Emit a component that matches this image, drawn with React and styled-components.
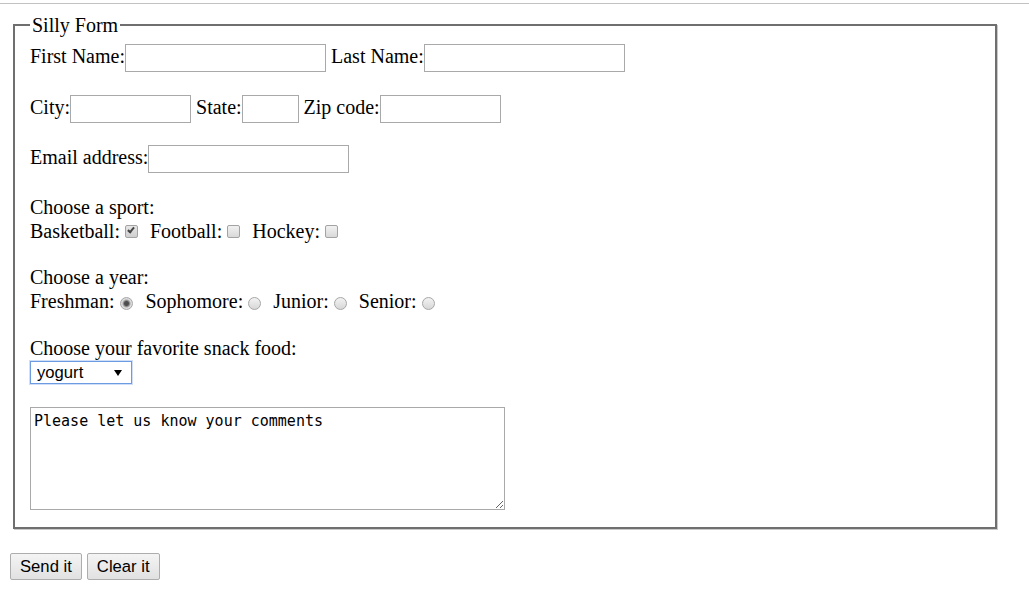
import React from "react";
import styled, { createGlobalStyle } from "styled-components";

const GlobalStyle = createGlobalStyle`
  *, *::before, *::after {
    box-sizing: border-box;
  }
  html, body {
    margin: 0;
    padding: 0;
    background: #fff;
  }
  body {
    font-family: "Liberation Serif", "Times New Roman", serif;
    font-size: 20px;
    color: #000;
  }
`;

const Page = styled.div`
  padding: 0 10px 20px;
`;

const TopRule = styled.div`
  height: 1px;
  margin: 3px -10px 0;
  background: #c2c2c2;
`;

const Fieldset = styled.fieldset`
  width: 984px;
  margin: 10px 0 0 3px;
  padding: 8px 15px 17px;
  border: 2px solid #6f6f6f;
  box-shadow: 1px 1px 0 #c9c9c9;
  min-inline-size: 0;
`;

const Legend = styled.legend`
  padding: 0 2px;
  line-height: 22px;
`;

const Row = styled.div`
  height: 28px;
  line-height: 23px;
  margin-bottom: 22.5px;
  white-space: nowrap;
`;

const TextInput = styled.input.attrs({ type: "text" })`
  width: ${(p) => p.$w}px;
  height: 28px;
  padding: 1px 2px;
  border: 1px solid #a9a9a9;
  font-family: "Liberation Sans", Arial, sans-serif;
  font-size: 16.67px;
  background: #fff;
  vertical-align: baseline;
  outline: none;
`;

const Group = styled.div`
  margin-bottom: 23.5px;
`;

const Caption = styled.div`
  line-height: 23px;
`;

const Options = styled.div`
  display: flex;
  align-items: center;
  height: 24px;
  padding-top: 1px;
  white-space: nowrap;
`;

const Checkbox = styled.input.attrs({ type: "checkbox" })`
  appearance: none;
  position: relative;
  width: 13px;
  height: 13px;
  margin: 0 12px 0 5px;
  border: 1px solid #a3a3a3;
  border-radius: 2px;
  background: linear-gradient(#f1f1f1, #d9d9d9);
  flex: none;

  &:checked {
    background: linear-gradient(#e6e6e6, #cfcfcf);
  }

  &:checked::after {
    content: "";
    position: absolute;
    left: 3.5px;
    top: 0.5px;
    width: 4px;
    height: 7px;
    border-right: 2px solid #444;
    border-bottom: 2px solid #444;
    transform: rotate(40deg);
  }
`;

const Radio = styled.input.attrs({ type: "radio" })`
  appearance: none;
  width: 13px;
  height: 13px;
  margin: 3px 12px 0 ${(p) => (p.$first ? 6 : 5)}px;
  border: 1px solid #a6a6a6;
  border-radius: 50%;
  background: linear-gradient(#f3f3f3, #d7d7d7);
  flex: none;

  &:checked {
    background: radial-gradient(
      circle at center,
      #4e4e4e 0 2px,
      #8c8c8c 3px,
      #dcdcdc 4.5px
    );
  }
`;

const SelectWrap = styled.div`
  position: relative;
  width: 102px;
  height: 24px;
  padding-top: 1px;
`;

const Select = styled.select`
  appearance: none;
  display: block;
  width: 102px;
  height: 23px;
  padding: 0 20px 0 6px;
  border: 1px solid #6c9be2;
  border-radius: 0;
  box-shadow: 0 0 0 1px rgba(120, 164, 232, 0.35);
  background: #fff;
  font-family: "Liberation Sans", Arial, sans-serif;
  font-size: 16.67px;
  color: #000;
  outline: none;
`;

const Arrow = styled.svg`
  position: absolute;
  right: 10px;
  top: 10px;
  pointer-events: none;
`;

const Comments = styled.textarea`
  display: block;
  width: 475px;
  height: 103px;
  margin-top: 23.5px;
  padding: 4px 3px 2px;
  border: 1px solid #a9a9a9;
  font-family: "DejaVu Sans Mono", "Liberation Mono", monospace;
  font-size: 15px;
  line-height: 18px;
  color: #000;
  resize: both;
  outline: none;
`;

const ButtonRow = styled.div`
  display: flex;
  gap: 5px;
  margin-top: 24px;
`;

const Button = styled.button`
  height: 27px;
  padding: 0 9px;
  border: 1px solid #adadad;
  border-radius: 2px;
  background: linear-gradient(#f4f4f4, #e1e1e1);
  font-family: "Liberation Sans", Arial, sans-serif;
  font-size: 16.67px;
  color: #000;
`;

const sports = [
  { label: "Basketball:", checked: true },
  { label: "Football:", checked: false },
  { label: "Hockey:", checked: false },
];

const years = ["Freshman:", "Sophomore:", "Junior:", "Senior:"];

const App = () => (
  <Page>
    <GlobalStyle />
    <TopRule />
    <form onSubmit={(e) => e.preventDefault()}>
      <Fieldset>
        <Legend>Silly Form</Legend>
        <Row>
          First Name:<TextInput $w={201} /> Last Name:<TextInput $w={201} />
        </Row>
        <Row>
          City:<TextInput $w={121} /> State:<TextInput $w={57} /> Zip code:
          <TextInput $w={121} />
        </Row>
        <Row>
          Email address:<TextInput $w={201} />
        </Row>

        <Group>
          <Caption>Choose a sport:</Caption>
          <Options>
            {sports.map((s) => (
              <React.Fragment key={s.label}>
                {s.label}
                <Checkbox defaultChecked={s.checked} />
              </React.Fragment>
            ))}
          </Options>
        </Group>

        <Group>
          <Caption>Choose a year:</Caption>
          <Options>
            {years.map((y, i) => (
              <React.Fragment key={y}>
                {y}
                <Radio name="year" $first={i === 0} defaultChecked={i === 0} />
              </React.Fragment>
            ))}
          </Options>
        </Group>

        <Group style={{ marginBottom: 0 }}>
          <Caption>Choose your favorite snack food:</Caption>
          <SelectWrap>
            <Select defaultValue="yogurt">
              <option value="yogurt">yogurt</option>
              <option value="chips">chips</option>
              <option value="fruit">fruit</option>
              <option value="cookies">cookies</option>
            </Select>
            <Arrow width="8" height="6" viewBox="0 0 8 6">
              <path d="M0 0 H8 L4 6 Z" fill="#000" />
            </Arrow>
          </SelectWrap>
        </Group>

        <Comments defaultValue="Please let us know your comments" />
      </Fieldset>
      <ButtonRow>
        <Button type="submit">Send it</Button>
        <Button type="reset">Clear it</Button>
      </ButtonRow>
    </form>
  </Page>
);

export default App;
